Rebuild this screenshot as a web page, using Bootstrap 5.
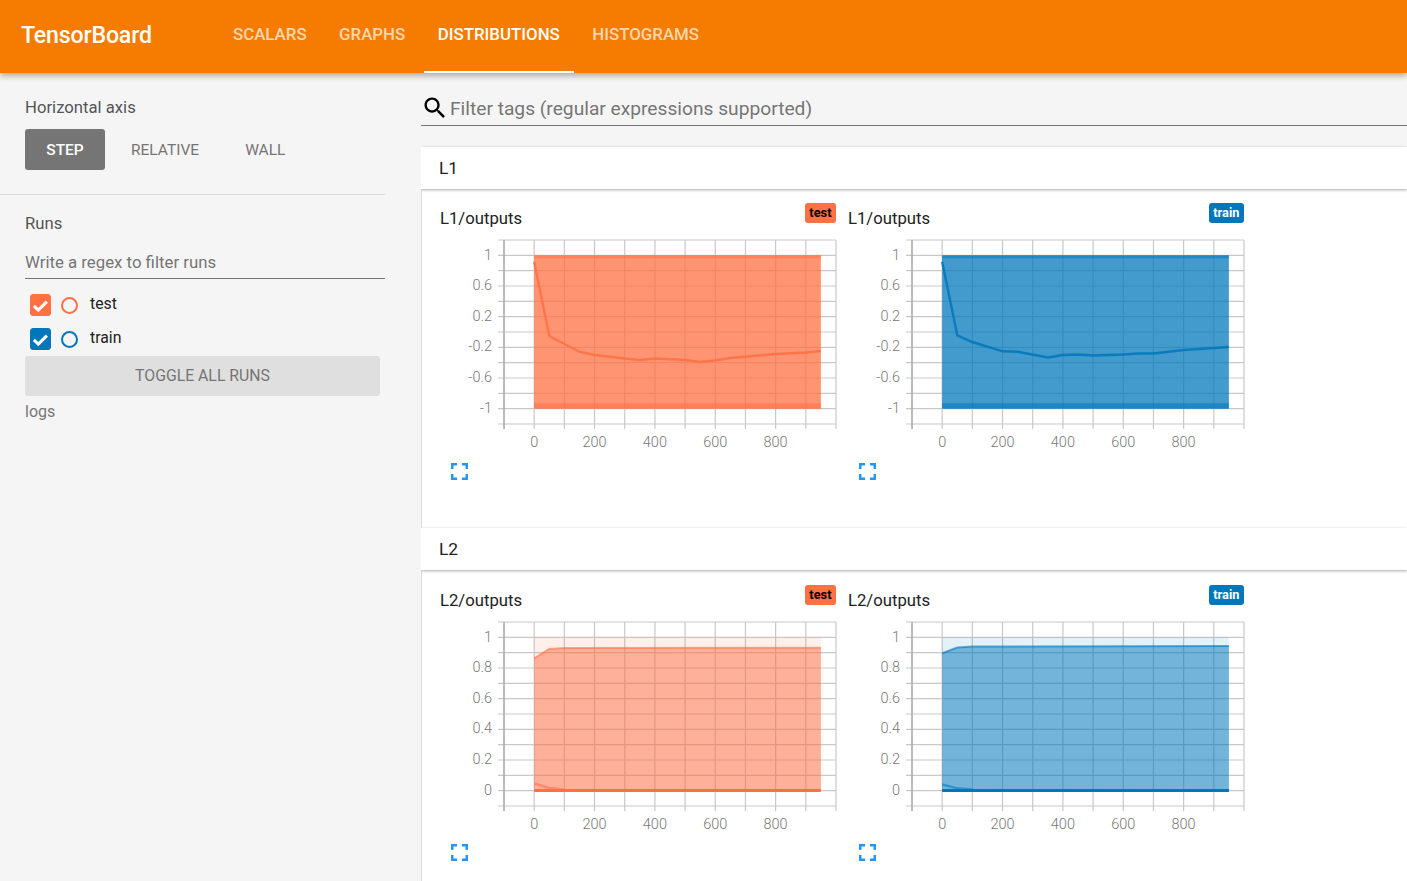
<!DOCTYPE html>
<html lang="en">
<head>
<meta charset="utf-8">
<title>TensorBoard</title>
<link href="https://cdn.jsdelivr.net/npm/bootstrap@5.3.0/dist/css/bootstrap.min.css" rel="stylesheet">
<style>
html,body{height:881px;overflow:hidden}
body{font-family:Roboto,"Liberation Sans",sans-serif;background:#f5f5f5;color:#212121}
.tb-head{height:73px;background:#f57c00;box-shadow:0 3px 6px rgba(0,0,0,.3);position:relative;z-index:5}
.tb-title{width:219px;padding-left:21px;padding-bottom:2px;font-size:23.2px;font-weight:500;color:#fff;letter-spacing:-.2px}
.tb-tabs{gap:4.5px;height:73px}
.tb-tab{display:flex;align-items:center;padding:0 14px 1px;font-size:16.85px;font-weight:500;color:rgba(255,255,255,.7);border-bottom:2px solid transparent;text-decoration:none}
.tb-tab-on{color:#fff;border-bottom-color:#fff}
.tb-body{height:808px}
.tb-side{width:421px;flex:none}
.tb-sec{padding:24px 0 24px 25px;width:385px}
.tb-sec-line{border-bottom:1px solid #ddd}
.tb-sec-runs{padding-top:18px;padding-bottom:0}
.tb-lbl{font-size:16.7px;color:#555;line-height:20px;padding-top:1px}
.tb-axisbtns{margin-top:11px;height:41px}
.tb-step{width:80px;background:#757575;color:#fff;font-size:15.5px;font-weight:500;border-radius:3px;line-height:42px;text-align:center}
.tb-opt{color:#757575;font-size:15.5px;line-height:42px}
.tb-opt-a{margin-left:26px}
.tb-opt-b{margin-left:46px}
.tb-regex{margin-top:17px;border-bottom:1px solid #757575;height:28px;font-size:16.8px;line-height:22px;color:#757575}
.tb-runlist{margin:9px 0 0 25px}
.tb-run{height:34px;padding-left:5px;font-size:15.8px;color:#212121;gap:10px}
.tb-run .form-check-input{width:21px;height:22px;margin:0;border-radius:3px;flex:none;opacity:1}
.tb-c-test{--tb:#ff7043}
.tb-c-train{--tb:#0077bb}
.tb-run .form-check-input:checked{background-color:var(--tb);border-color:var(--tb);background-size:100%;background-image:url("data:image/svg+xml,%3csvg xmlns='http://www.w3.org/2000/svg' viewBox='0 0 20 20'%3e%3cpath fill='none' stroke='%23fff' stroke-width='3.2' d='M3 10.5l4.7 4.4 9-9'/%3e%3c/svg%3e")}
.tb-ring{width:17px;height:17px;border:2px solid var(--tb);border-radius:50%;flex:none}
.tb-runname{margin-left:2px;position:relative;top:-1px}
.tb-toggle{width:355px;height:40px;margin-left:25px;background:#dfdfdf;border-radius:3px;color:#757575;font-size:15.8px;line-height:40px;text-align:center}
.tb-logs{margin:6px 0 0 25px;color:#757575;font-size:16px;line-height:20px}
.tb-main{flex:1;min-width:0;overflow:hidden}
.tb-search{height:53px;border-bottom:1px solid #757575;padding-top:17px}
.tb-search span{font-size:19.2px;line-height:24px;color:#757575;margin-left:1px;position:relative;top:1px}
.tb-search svg{flex:none}
.tb-pane-head{background:#fff;height:42px;box-shadow:0 1px 3px rgba(0,0,0,.3);padding-left:18px;font-size:17.4px;line-height:42px;color:#212121;position:relative}
.tb-first{margin-top:21px}
.tb-pane{background:#fff;height:338px;border-left:1px solid #ddd;padding-left:10px;margin-top:1px}
.tb-pane-next{padding-top:1px}
.tb-pane-next .tb-expand{margin-top:1px}
.tb-chart{width:408px;flex:none}
.tb-chead{height:45px;padding:14px 4px 0 8px}
.tb-ctitle{font-size:16.7px;line-height:29px;color:#212121}
.tb-tag{height:20px;line-height:20px;padding:0 4.5px;border-radius:3px;font-size:12.8px;font-weight:700;position:relative;top:-1px}
.tb-tag-test{background:#ff7043;color:#000}
.tb-tag-train{background:#0077bb;color:#fff}
.tb-plot{display:block;margin-left:33px}
.tb-plot text{font-family:Roboto,"Liberation Sans",sans-serif;font-size:14.5px;font-weight:300;fill:#777}
.tb-expand{display:block;margin:2px 0 0 13px}
</style>
</head>
<body>
<svg width="0" height="0" class="position-absolute">
<defs>
<g id="tbgrid" fill="none">
<path stroke="#c8c8c8" stroke-width="1.2" d="M498 240H836M498 255.33H836M498 270.67H836M498 286H836M498 301.33H836M498 316.67H836M498 332H836M498 347.33H836M498 362.67H836M498 378H836M498 393.33H836M498 408.67H836M498 424H836"/>
<path stroke="#c8c8c8" stroke-width="1.2" d="M534.18 240V429M564.36 240V429M594.55 240V429M624.73 240V429M654.91 240V429M685.09 240V429M715.27 240V429M745.45 240V429M775.64 240V429M805.82 240V429M836 240V429"/>
<path stroke="#aaa" stroke-width="1.6" d="M504 240V429"/>
</g>
</defs>
</svg>

<header class="tb-head d-flex align-items-center">
  <div class="tb-title">TensorBoard</div>
  <nav class="tb-tabs d-flex">
    <a class="tb-tab" href="#">SCALARS</a>
    <a class="tb-tab" href="#">GRAPHS</a>
    <a class="tb-tab tb-tab-on" href="#">DISTRIBUTIONS</a>
    <a class="tb-tab" href="#">HISTOGRAMS</a>
  </nav>
</header>

<div class="tb-body d-flex">
  <aside class="tb-side">
    <div class="tb-sec tb-sec-line">
      <div class="tb-lbl">Horizontal axis</div>
      <div class="tb-axisbtns d-flex">
        <div class="tb-step">STEP</div>
        <div class="tb-opt tb-opt-a">RELATIVE</div>
        <div class="tb-opt tb-opt-b">WALL</div>
      </div>
    </div>
    <div class="tb-sec tb-sec-runs">
      <div class="tb-lbl">Runs</div>
      <div class="tb-regex">Write a regex to filter runs</div>
    </div>
    <div class="tb-runlist">
      <div class="tb-run d-flex align-items-center tb-c-test">
        <input class="form-check-input" type="checkbox" checked aria-label="test">
        <span class="tb-ring"></span><span class="tb-runname">test</span>
      </div>
      <div class="tb-run d-flex align-items-center tb-c-train">
        <input class="form-check-input" type="checkbox" checked aria-label="train">
        <span class="tb-ring"></span><span class="tb-runname">train</span>
      </div>
    </div>
    <div class="tb-toggle">TOGGLE ALL RUNS</div>
    <div class="tb-logs">logs</div>
  </aside>

  <main class="tb-main">
    <div class="tb-search d-flex align-items-center">
      <svg width="28" height="28" viewBox="0 0 24 24"><path fill="#000" d="M15.5 14h-.79l-.28-.27C15.41 12.59 16 11.11 16 9.5 16 5.91 13.09 3 9.5 3S3 5.91 3 9.5 5.91 16 9.5 16c1.61 0 3.09-.59 4.23-1.57l.27.28v.79l5 4.99L20.49 19l-4.99-5zm-6 0C7.01 14 5 11.99 5 9.5S7.01 5 9.5 5 14 7.01 14 9.5 11.99 14 9.5 14z"/></svg>
      <span>Filter tags (regular expressions supported)</span>
    </div>

    <div class="tb-pane-head tb-first">L1</div>
    <div class="tb-pane d-flex">
      <div class="tb-chart">
        <div class="tb-chead d-flex justify-content-between align-items-start"><span class="tb-ctitle">L1/outputs</span><span class="tb-tag tb-tag-test">test</span></div>
        <svg class="tb-plot" width="375" height="220" viewBox="465 235 375 220">
          <use href="#tbgrid"/>
          <rect x="534.18" y="255.33" width="286.7" height="153.34" fill="#ff7043" opacity=".75"/>
          <rect x="534.18" y="255.33" width="286.7" height="3" fill="#ff7043" opacity=".5"/>
          <rect x="534.18" y="403.3" width="286.7" height="5.4" fill="#ff7043" opacity=".55"/>
          <path fill="none" stroke="#ff7043" stroke-width="2.4" opacity=".85" d="M534.18 261.7L549.3 336L564.4 344L579.5 351.7L594.6 355L624.7 358.5L639.8 360L654.9 358.5L685.1 360L700.2 362L715.3 360.5L730.4 358L775.6 354L805.8 352.5L820.9 351"/>
          <g text-anchor="end"><text x="492" y="260">1</text><text x="492" y="290">0.6</text><text x="492" y="320.5">0.2</text><text x="492" y="351">-0.2</text><text x="492" y="381.5">-0.6</text><text x="492" y="413">-1</text></g>
          <g text-anchor="middle"><text x="534.2" y="447">0</text><text x="594.5" y="447">200</text><text x="654.9" y="447">400</text><text x="715.3" y="447">600</text><text x="775.6" y="447">800</text></g>
        </svg>
        <svg class="tb-expand" width="29" height="29" viewBox="0 0 24 24"><path fill="#2196f3" d="M7 14H5v5h5v-2H7v-3zm-2-4h2V7h3V5H5v5zm12 7h-3v2h5v-5h-2v3zM14 5v2h3v3h2V5h-5z"/></svg>
      </div>
      <div class="tb-chart">
        <div class="tb-chead d-flex justify-content-between align-items-start"><span class="tb-ctitle">L1/outputs</span><span class="tb-tag tb-tag-train">train</span></div>
        <svg class="tb-plot" width="375" height="220" viewBox="465 235 375 220">
          <use href="#tbgrid"/>
          <rect x="534.18" y="255.33" width="286.7" height="153.34" fill="#0077bb" opacity=".74"/>
          <rect x="534.18" y="255.33" width="286.7" height="3" fill="#0077bb" opacity=".5"/>
          <rect x="534.18" y="403.3" width="286.7" height="5.4" fill="#0077bb" opacity=".55"/>
          <path fill="none" stroke="#0077bb" stroke-width="2.4" opacity=".85" d="M534.18 261.7L549.3 335.3L564.4 342L594.6 351.3L609.7 351.7L639.9 357.5L654.9 355L670 354.5L685.1 355.5L715.3 354.5L730.4 353.5L745.5 353.5L775.6 350L820.9 347"/>
          <g text-anchor="end"><text x="492" y="260">1</text><text x="492" y="290">0.6</text><text x="492" y="320.5">0.2</text><text x="492" y="351">-0.2</text><text x="492" y="381.5">-0.6</text><text x="492" y="413">-1</text></g>
          <g text-anchor="middle"><text x="534.2" y="447">0</text><text x="594.5" y="447">200</text><text x="654.9" y="447">400</text><text x="715.3" y="447">600</text><text x="775.6" y="447">800</text></g>
        </svg>
        <svg class="tb-expand" width="29" height="29" viewBox="0 0 24 24"><path fill="#2196f3" d="M7 14H5v5h5v-2H7v-3zm-2-4h2V7h3V5H5v5zm12 7h-3v2h5v-5h-2v3zM14 5v2h3v3h2V5h-5z"/></svg>
      </div>
    </div>

    <div class="tb-pane-head">L2</div>
    <div class="tb-pane tb-pane-next d-flex">
      <div class="tb-chart">
        <div class="tb-chead d-flex justify-content-between align-items-start"><span class="tb-ctitle">L2/outputs</span><span class="tb-tag tb-tag-test">test</span></div>
        <svg class="tb-plot" width="375" height="220" viewBox="465 235 375 220">
          <use href="#tbgrid"/>
          <rect x="534.18" y="255.33" width="286.7" height="153" fill="#ff7043" opacity=".1"/>
          <path fill="#ff7043" opacity=".5" d="M534.18 276.3L549.3 267L564.4 266L820.9 265.7V409.5H534.18Z"/>
          <path fill="none" stroke="#ff7043" stroke-width="2.4" opacity=".55" d="M534.18 401.5L549.3 406L564.4 407.5"/>
          <rect x="534.18" y="407" width="286.7" height="3" fill="#ff7043"/>
          <path fill="none" stroke="#ff7043" stroke-width="2" opacity=".6" d="M534.18 276.3L549.3 267L564.4 266L820.9 265.7"/>
          <g text-anchor="end"><text x="492" y="260">1</text><text x="492" y="290">0.8</text><text x="492" y="320.5">0.6</text><text x="492" y="351">0.4</text><text x="492" y="381.5">0.2</text><text x="492" y="413">0</text></g>
          <g text-anchor="middle"><text x="534.2" y="447">0</text><text x="594.5" y="447">200</text><text x="654.9" y="447">400</text><text x="715.3" y="447">600</text><text x="775.6" y="447">800</text></g>
        </svg>
        <svg class="tb-expand" width="29" height="29" viewBox="0 0 24 24"><path fill="#2196f3" d="M7 14H5v5h5v-2H7v-3zm-2-4h2V7h3V5H5v5zm12 7h-3v2h5v-5h-2v3zM14 5v2h3v3h2V5h-5z"/></svg>
      </div>
      <div class="tb-chart">
        <div class="tb-chead d-flex justify-content-between align-items-start"><span class="tb-ctitle">L2/outputs</span><span class="tb-tag tb-tag-train">train</span></div>
        <svg class="tb-plot" width="375" height="220" viewBox="465 235 375 220">
          <use href="#tbgrid"/>
          <rect x="534.18" y="255.33" width="286.7" height="153" fill="#0077bb" opacity=".1"/>
          <path fill="#0077bb" opacity=".5" d="M534.18 271.3L549.3 265.5L564.4 264.5L820.9 264V409.5H534.18Z"/>
          <path fill="none" stroke="#0077bb" stroke-width="2.4" opacity=".55" d="M534.18 402.5L549.3 406.3L564.4 407.5"/>
          <rect x="534.18" y="407" width="286.7" height="3" fill="#0077bb"/>
          <path fill="none" stroke="#0077bb" stroke-width="2" opacity=".6" d="M534.18 271.3L549.3 265.5L564.4 264.5L820.9 264"/>
          <g text-anchor="end"><text x="492" y="260">1</text><text x="492" y="290">0.8</text><text x="492" y="320.5">0.6</text><text x="492" y="351">0.4</text><text x="492" y="381.5">0.2</text><text x="492" y="413">0</text></g>
          <g text-anchor="middle"><text x="534.2" y="447">0</text><text x="594.5" y="447">200</text><text x="654.9" y="447">400</text><text x="715.3" y="447">600</text><text x="775.6" y="447">800</text></g>
        </svg>
        <svg class="tb-expand" width="29" height="29" viewBox="0 0 24 24"><path fill="#2196f3" d="M7 14H5v5h5v-2H7v-3zm-2-4h2V7h3V5H5v5zm12 7h-3v2h5v-5h-2v3zM14 5v2h3v3h2V5h-5z"/></svg>
      </div>
    </div>
  </main>
</div>
<script src="https://cdn.jsdelivr.net/npm/bootstrap@5.3.0/dist/js/bootstrap.bundle.min.js"></script>
</body>
</html>
